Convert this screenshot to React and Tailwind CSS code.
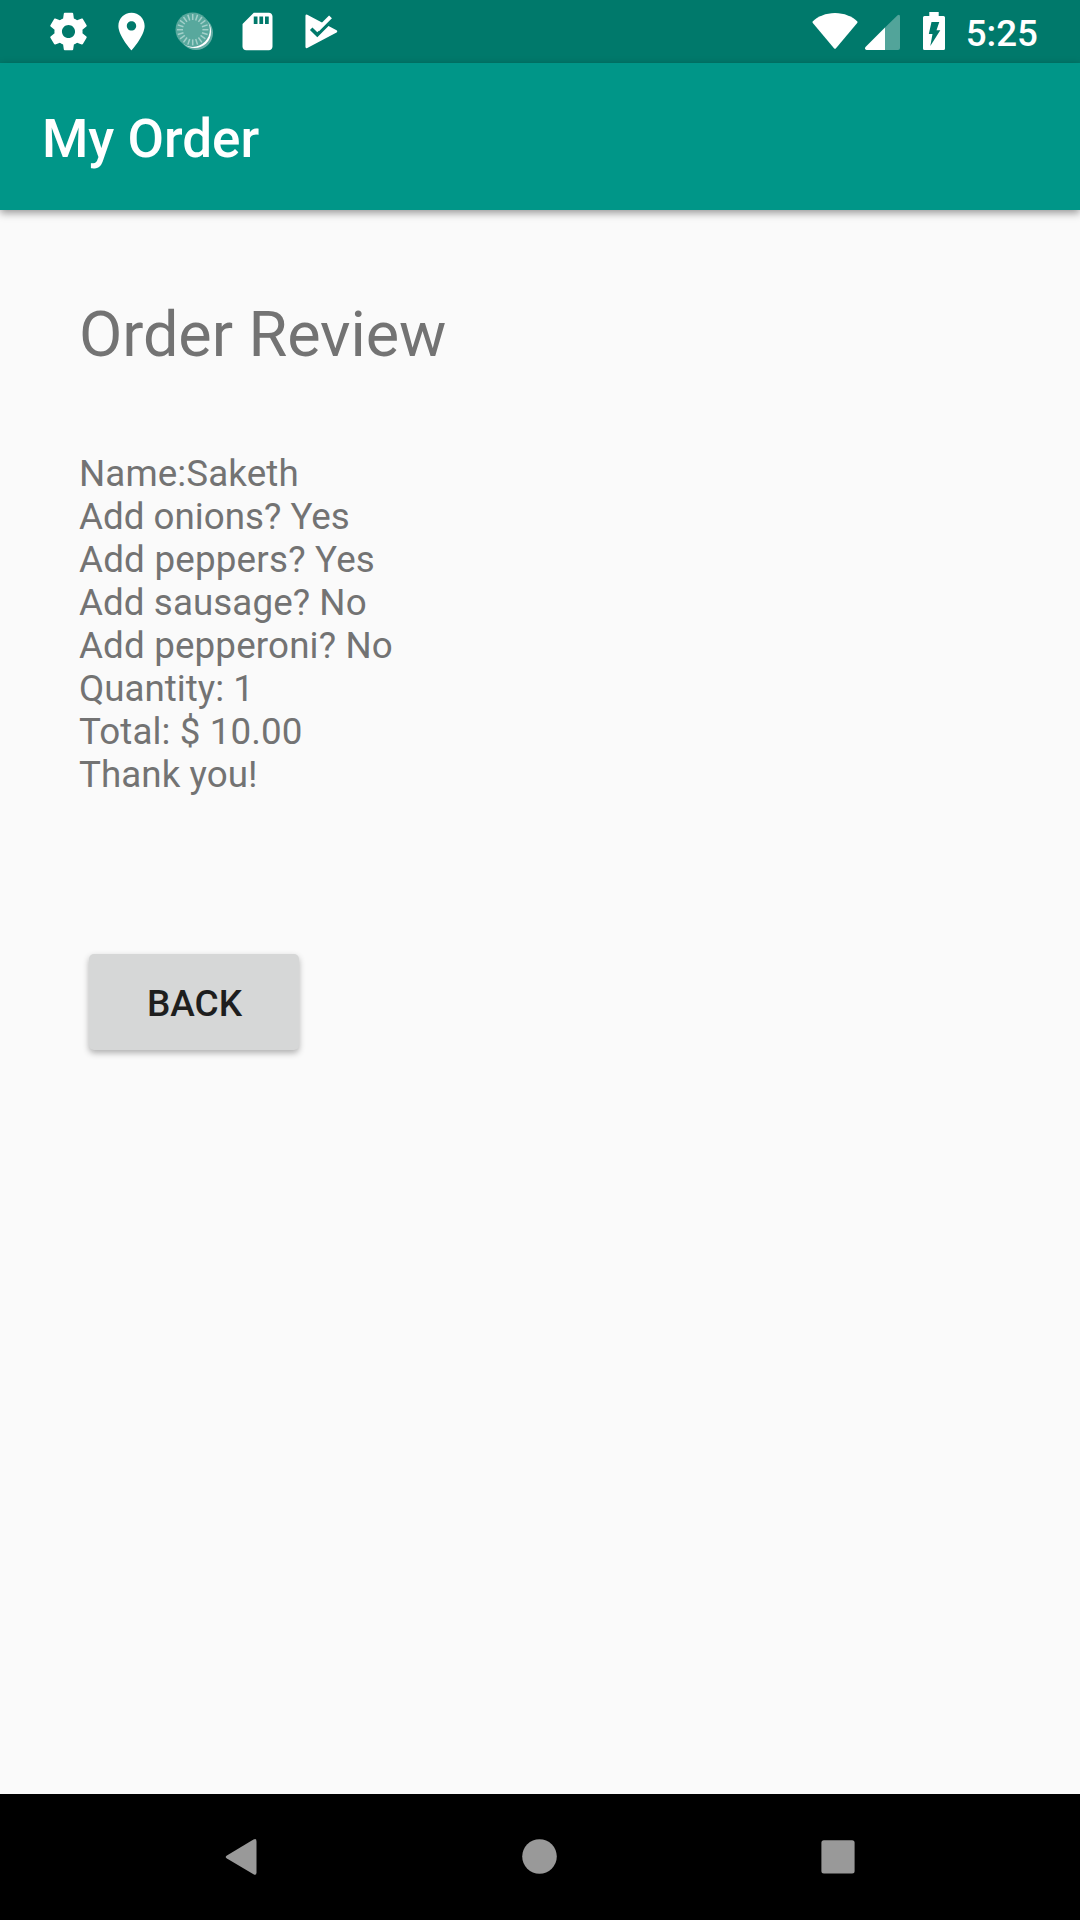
const LINES = [
  { text: "Name:Saketh", tracking: "tracking-[0.1px]" },
  { text: "Add onions? Yes", tracking: "tracking-[0px]" },
  { text: "Add peppers? Yes", tracking: "tracking-[0.21px]" },
  { text: "Add sausage? No", tracking: "tracking-[0.08px]" },
  { text: "Add pepperoni? No", tracking: "tracking-[0.15px]" },
  { text: "Quantity: 1", tracking: "tracking-[0px]" },
  { text: "Total: $ 10.00", tracking: "tracking-[0.1px]" },
  { text: "Thank you!", tracking: "tracking-[0.05px]" },
];

function Icon({ d }) {
  return (
    <svg className="size-[45px] shrink-0" viewBox="0 0 24 24" fill="currentColor">
      <path d={d} />
    </svg>
  );
}

const GEAR =
  "M19.43 12.98c.04-.32.07-.64.07-.98s-.03-.66-.07-.98l2.11-1.65c.19-.15.24-.42.12-.64l-2-3.46c-.12-.22-.39-.3-.61-.22l-2.49 1c-.52-.4-1.08-.73-1.69-.98l-.38-2.65C14.46 2.18 14.25 2 14 2h-4c-.25 0-.46.18-.49.42l-.38 2.65c-.61.25-1.17.59-1.69.98l-2.49-1c-.23-.09-.49 0-.61.22l-2 3.46c-.13.22-.07.49.12.64l2.11 1.65c-.04.32-.07.65-.07.98s.03.66.07.98l-2.11 1.65c-.19.15-.24.42-.12.64l2 3.46c.12.22.39.3.61.22l2.49-1c.52.4 1.08.73 1.69.98l.38 2.65c.03.24.24.42.49.42h4c.25 0 .46-.18.49-.42l.38-2.65c.61-.25 1.17-.59 1.69-.98l2.49 1c.23.09.49 0 .61-.22l2-3.46c.12-.22.07-.49-.12-.64l-2.11-1.65zM12 15.5c-1.93 0-3.5-1.57-3.5-3.5s1.57-3.5 3.5-3.5 3.5 1.57 3.5 3.5-1.57 3.5-3.5 3.5z";
const PLACE =
  "M12 2C8.13 2 5 5.13 5 9c0 5.25 7 13 7 13s7-7.75 7-13c0-3.87-3.13-7-7-7zm0 9.5c-1.38 0-2.5-1.12-2.5-2.5s1.12-2.5 2.5-2.5 2.5 1.12 2.5 2.5-1.12 2.5-2.5 2.5z";
const SD_CARD =
  "M18 2h-8L4.02 8 4 20c0 1.1.9 2 2 2h12c1.1 0 2-.9 2-2V4c0-1.1-.9-2-2-2zm-6 6h-2V4h2v4zm3 0h-2V4h2v4zm3 0h-2V4h2v4z";

function Spinner() {
  const ticks = Array.from({ length: 20 }, (_, i) => i * 18);
  return (
    <svg className="size-[45px] shrink-0" viewBox="0 0 45 45" fill="none">
      <circle cx="24" cy="24" r="17" fill="#fff" fillOpacity="0.4" />
      <circle cx="22.6" cy="22.6" r="16.5" fill="#fff" />
      <circle cx="20.7" cy="20.7" r="17.2" fill="#58a89d" />
      {ticks.map((a) => (
        <path key={a} d="M20.700 5v6" stroke="#a3d0ca" strokeWidth="1.5" transform={`rotate(${a} 20.7 20.7)`} />
      ))}
    </svg>
  );
}

function StatusBar() {
  return (
    <header className="flex h-[63px] items-center justify-between bg-[#00796b] pl-[46px] pr-[42px]">
      <div className="flex items-center gap-[18px]">
        <Icon d={GEAR} />
        <Icon d={PLACE} />
        <Spinner />
        <Icon d={SD_CARD} />
        <svg className="size-[45px] shrink-0" viewBox="0 0 45 45" fill="none">
          <path d="M8.700 6.800 L38 22.300 L8.700 37.900Z" fill="#fff" stroke="#fff" strokeWidth="2.500" strokeLinejoin="round" />
          <path d="M13.200 19.700 L19.300 25.800 L36 9.100" stroke="#00796b" strokeWidth="3.600" />
          <path d="M19.500 20.800 L32.500 7.800" stroke="#fff" strokeWidth="4" />
        </svg>
      </div>
      <div className="flex h-full items-center">
        <svg className="h-[63px] w-[156px]" viewBox="1 0 156 63">
          <path d="M12.6 21.5 C17.5 16.5 26 13 35 13 C44 13 52.5 16.5 57.4 21.5 L57.4 22.8 L36 48.3 Q35 49.4 34 48.3 L12.6 22.8Z" fill="#fff" />
          <path d="M85 27.5 L97.6 15.2 Q100 14 100 16.5 V48 Q100 50 98 50 H85Z" fill="#fff" fillOpacity="0.32" />
          <path d="M85 27.5 V50 H66.5 Q64 49 65.5 47Z" fill="#fff" />
          <path
            fillRule="evenodd"
            d="M129.300 12 H138.700 V16 H143.500 Q145 16 145 17.500 V48.500 Q145 50 143.500 50 H124.500 Q123 50 123 48.500 V17.500 Q123 16 124.500 16 H129.300Z M131.500 22 L128.800 34 H132.500 L130.300 46 L140.300 30.200 H136.500 L139.300 22Z"
            fill="#fff"
          />
        </svg>
        <span className="relative top-[1.500px] ml-[9px] text-[36.750px] font-medium leading-[43px]">5:25</span>
      </div>
    </header>
  );
}

function NavBar() {
  return (
    <nav className="flex h-[126px] items-center justify-center gap-[238px] bg-black text-[#999]">
      <svg className="size-[60px]" viewBox="1 0 60 60" fill="currentColor">
        <path d="M15.900 28.400 L42.500 12.600 Q45.500 11 45.500 14.500 V45.500 Q45.500 49 42.500 47.300 L15.900 31.600 Q13.500 30 15.900 28.400Z" />
      </svg>
      <svg className="size-[60px]" viewBox="0 0 60 60" fill="currentColor">
        <circle cx="29.500" cy="29.500" r="17.300" />
      </svg>
      <svg className="size-[60px]" viewBox="0 0 60 60" fill="currentColor">
        <rect x="13.400" y="13.300" width="33.200" height="33.200" rx="2.500" />
      </svg>
    </nav>
  );
}

export default function App() {
  return (
    <div className="flex h-[1920px] w-[1080px] flex-col overflow-hidden bg-[#fafafa] font-['Roboto',sans-serif] text-white">
      <StatusBar />
      <div className="flex h-[147px] shrink-0 items-center bg-[#009688] pl-[42px] pt-[4px] shadow-[0_3px_8px_rgba(0,0,0,0.4)]">
        <h1 className="text-[53px] font-medium leading-[62px]">My Order</h1>
      </div>
      <main className="flex flex-1 flex-col items-start pl-[79px] pt-[88px] text-[#737373]">
        <h2 className="text-[63px] leading-[74px] tracking-[-0.1px]">Order Review</h2>
        <div className="mt-20 text-[36.750px] leading-[43px]">
          {LINES.map(({ text, tracking }) => (
            <p key={text} className={tracking}>
              {text}
            </p>
          ))}
        </div>
        <button className="ml-[10px] mt-[158px] flex h-24 w-[210px] items-center justify-center rounded-[5px] bg-[#d6d7d7] pl-px pt-[3px] text-[37px] font-medium leading-[43px] text-[#1e1e1e] shadow-[0_3px_6px_rgba(0,0,0,0.3)]">
          BACK
        </button>
      </main>
      <NavBar />
    </div>
  );
}
